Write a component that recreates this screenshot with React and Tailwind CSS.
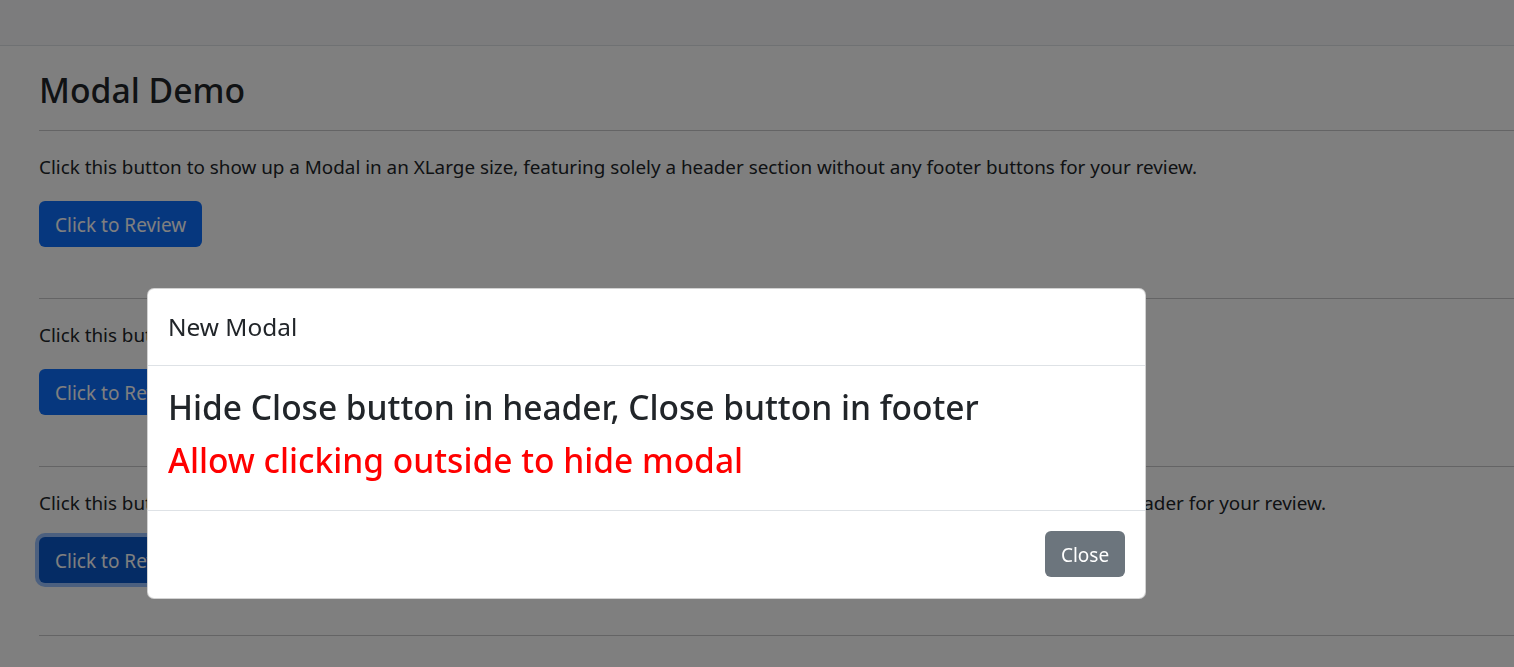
import React from "react";

const sections = [
  {
    text: "Click this button to show up a Modal in an XLarge size, featuring solely a header section without any footer buttons for your review.",
    focused: false,
  },
  {
    text: "Click this button to show up a Modal in a Large size, featuring a header section and footer buttons for your review.",
    focused: false,
  },
  {
    text: "Click this button to show up a Modal in a Default size, featuring a footer area with Close button and no Close button in the header for your review.",
    focused: true,
  },
];

function Section({ text, focused, first }) {
  return (
    <section>
      <hr className={(first ? "mt-[20px]" : "mt-[21px]") + " border-t border-[#c8c9ca]"} />
      <p className="mt-[23px] text-[18.85px] leading-[27px] whitespace-nowrap">{text}</p>
      <button
        type="button"
        className={
          "mt-[20px] h-[46px] px-[16px] pt-[3px] rounded-[6px] text-white text-[19px] leading-none flex items-center " +
          (focused
            ? "bg-[#0a58ca] ring-4 ring-[rgba(49,132,253,0.5)]"
            : "bg-[#0d6efd]")
        }
      >
        Click to Review
      </button>
      <div className="h-[30px]" />
    </section>
  );
}

export default function App() {
  return (
    <div className="relative h-[667px] overflow-hidden bg-white text-[#212529] font-['Noto_Sans',sans-serif]">
      <nav className="h-[46px] bg-[#f8f9fa] border-b border-[#dee2e6]" />
      <main className="pl-[39px] pt-[24px]">
        <h2 className="h-[40px] text-[33.7px] leading-[40px] font-medium">Modal Demo</h2>
        {sections.map((s, i) => (
          <Section key={i} first={i === 0} {...s} />
        ))}
        <hr className="mt-[22px] border-t border-[#c8c9ca]" />
      </main>

      <div className="fixed inset-0 bg-black/50" />

      <div className="absolute left-[147px] top-[288px] w-[999px] bg-white border border-[rgba(0,0,0,0.175)] rounded-[7px] flex flex-col">
        <div className="px-[20px] py-[20px] border-b border-[#dee2e6]">
          <h5 className="text-[24.4px] leading-[36px] font-normal">New Modal</h5>
        </div>
        <div className="px-[20px] pt-[21px] pb-[30px] border-b border-[#dee2e6]">
          <h3 className="text-[33.5px] leading-[40px] font-medium mb-[13px]">
            Hide Close button in header, Close button in footer
          </h3>
          <h3 className="text-[33.5px] leading-[40px] font-medium text-[#ff0000]">
            Allow clicking outside to hide modal
          </h3>
        </div>
        <div className="flex justify-end pt-[20px] pb-[21px] pr-[20px]">
          <button
            type="button"
            className="h-[46px] w-[80px] pt-[3px] rounded-[6px] bg-[#6c757d] text-white text-[19px] leading-none flex items-center justify-center"
          >
            Close
          </button>
        </div>
      </div>
    </div>
  );
}
